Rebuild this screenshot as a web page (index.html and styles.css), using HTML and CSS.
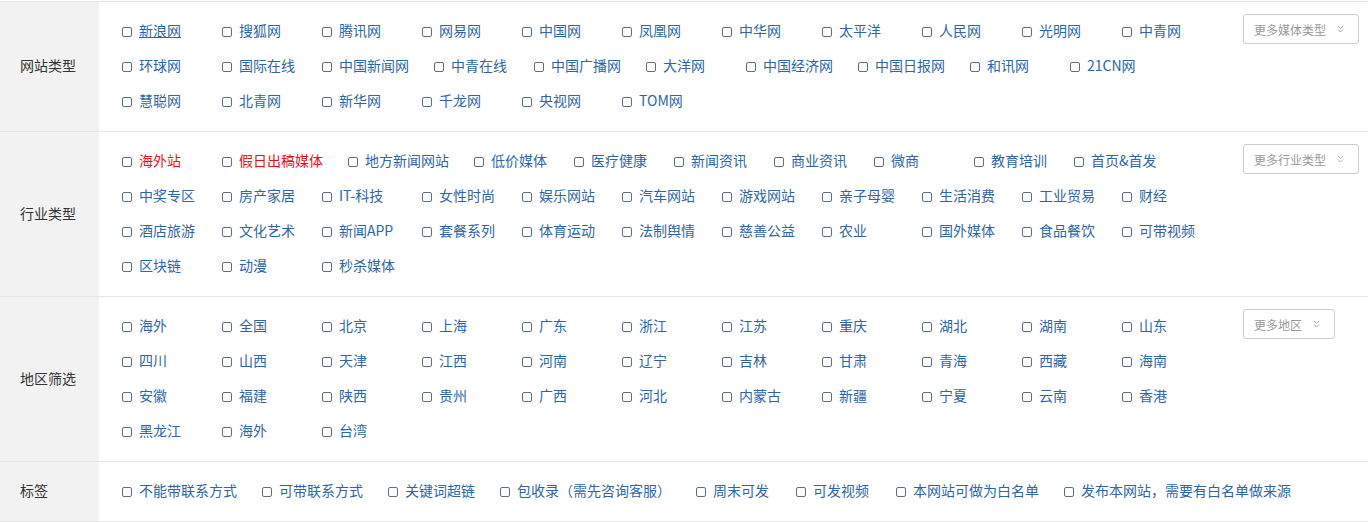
FILE: index.html
```html
<!DOCTYPE html>
<html lang="zh-CN">
<head>
    <meta charset="utf-8">
    <title>媒体筛选</title>
    <link rel="stylesheet" href="styles.css">
</head>
<body>
    <div class="filter">
        <!-- 网站类型 -->
        <div class="filter-row">
            <div class="filter-label">网站类型</div>
            <div class="filter-body">
                <div class="option-list">
                    <label class="option is-hover"><input type="checkbox" class="box"><span class="name">新浪网</span></label>
                    <label class="option"><input type="checkbox" class="box"><span class="name">搜狐网</span></label>
                    <label class="option"><input type="checkbox" class="box"><span class="name">腾讯网</span></label>
                    <label class="option"><input type="checkbox" class="box"><span class="name">网易网</span></label>
                    <label class="option"><input type="checkbox" class="box"><span class="name">中国网</span></label>
                    <label class="option"><input type="checkbox" class="box"><span class="name">凤凰网</span></label>
                    <label class="option"><input type="checkbox" class="box"><span class="name">中华网</span></label>
                    <label class="option"><input type="checkbox" class="box"><span class="name">太平洋</span></label>
                    <label class="option"><input type="checkbox" class="box"><span class="name">人民网</span></label>
                    <label class="option"><input type="checkbox" class="box"><span class="name">光明网</span></label>
                    <label class="option"><input type="checkbox" class="box"><span class="name">中青网</span></label>
                    <label class="option"><input type="checkbox" class="box"><span class="name">环球网</span></label>
                    <label class="option"><input type="checkbox" class="box"><span class="name">国际在线</span></label>
                    <label class="option"><input type="checkbox" class="box"><span class="name">中国新闻网</span></label>
                    <label class="option"><input type="checkbox" class="box"><span class="name">中青在线</span></label>
                    <label class="option"><input type="checkbox" class="box"><span class="name">中国广播网</span></label>
                    <label class="option"><input type="checkbox" class="box"><span class="name">大洋网</span></label>
                    <label class="option"><input type="checkbox" class="box"><span class="name">中国经济网</span></label>
                    <label class="option"><input type="checkbox" class="box"><span class="name">中国日报网</span></label>
                    <label class="option"><input type="checkbox" class="box"><span class="name">和讯网</span></label>
                    <label class="option"><input type="checkbox" class="box"><span class="name">21CN网</span></label>
                    <label class="option"><input type="checkbox" class="box"><span class="name">慧聪网</span></label>
                    <label class="option"><input type="checkbox" class="box"><span class="name">北青网</span></label>
                    <label class="option"><input type="checkbox" class="box"><span class="name">新华网</span></label>
                    <label class="option"><input type="checkbox" class="box"><span class="name">千龙网</span></label>
                    <label class="option"><input type="checkbox" class="box"><span class="name">央视网</span></label>
                    <label class="option"><input type="checkbox" class="box"><span class="name">TOM网</span></label>
                </div>
                <div class="filter-more">
                    <button class="more-btn">更多媒体类型<svg width="7" height="8" viewBox="0 0 7 8"><path d="M1 1l2.5 2.5L6 1M1 4.5l2.5 2.5L6 4.5"/></svg></button>
                </div>
            </div>
        </div>

        <!-- 行业类型 -->
        <div class="filter-row">
            <div class="filter-label">行业类型</div>
            <div class="filter-body">
                <div class="option-list">
                    <label class="option is-hot"><input type="checkbox" class="box"><span class="name">海外站</span></label>
                    <label class="option is-hot"><input type="checkbox" class="box"><span class="name">假日出稿媒体</span></label>
                    <label class="option"><input type="checkbox" class="box"><span class="name">地方新闻网站</span></label>
                    <label class="option"><input type="checkbox" class="box"><span class="name">低价媒体</span></label>
                    <label class="option"><input type="checkbox" class="box"><span class="name">医疗健康</span></label>
                    <label class="option"><input type="checkbox" class="box"><span class="name">新闻资讯</span></label>
                    <label class="option"><input type="checkbox" class="box"><span class="name">商业资讯</span></label>
                    <label class="option"><input type="checkbox" class="box"><span class="name">微商</span></label>
                    <label class="option"><input type="checkbox" class="box"><span class="name">教育培训</span></label>
                    <label class="option"><input type="checkbox" class="box"><span class="name">首页&amp;首发</span></label>
                    <label class="option"><input type="checkbox" class="box"><span class="name">中奖专区</span></label>
                    <label class="option"><input type="checkbox" class="box"><span class="name">房产家居</span></label>
                    <label class="option"><input type="checkbox" class="box"><span class="name">IT-科技</span></label>
                    <label class="option"><input type="checkbox" class="box"><span class="name">女性时尚</span></label>
                    <label class="option"><input type="checkbox" class="box"><span class="name">娱乐网站</span></label>
                    <label class="option"><input type="checkbox" class="box"><span class="name">汽车网站</span></label>
                    <label class="option"><input type="checkbox" class="box"><span class="name">游戏网站</span></label>
                    <label class="option"><input type="checkbox" class="box"><span class="name">亲子母婴</span></label>
                    <label class="option"><input type="checkbox" class="box"><span class="name">生活消费</span></label>
                    <label class="option"><input type="checkbox" class="box"><span class="name">工业贸易</span></label>
                    <label class="option"><input type="checkbox" class="box"><span class="name">财经</span></label>
                    <label class="option"><input type="checkbox" class="box"><span class="name">酒店旅游</span></label>
                    <label class="option"><input type="checkbox" class="box"><span class="name">文化艺术</span></label>
                    <label class="option"><input type="checkbox" class="box"><span class="name">新闻APP</span></label>
                    <label class="option"><input type="checkbox" class="box"><span class="name">套餐系列</span></label>
                    <label class="option"><input type="checkbox" class="box"><span class="name">体育运动</span></label>
                    <label class="option"><input type="checkbox" class="box"><span class="name">法制舆情</span></label>
                    <label class="option"><input type="checkbox" class="box"><span class="name">慈善公益</span></label>
                    <label class="option"><input type="checkbox" class="box"><span class="name">农业</span></label>
                    <label class="option"><input type="checkbox" class="box"><span class="name">国外媒体</span></label>
                    <label class="option"><input type="checkbox" class="box"><span class="name">食品餐饮</span></label>
                    <label class="option"><input type="checkbox" class="box"><span class="name">可带视频</span></label>
                    <label class="option"><input type="checkbox" class="box"><span class="name">区块链</span></label>
                    <label class="option"><input type="checkbox" class="box"><span class="name">动漫</span></label>
                    <label class="option"><input type="checkbox" class="box"><span class="name">秒杀媒体</span></label>
                </div>
                <div class="filter-more">
                    <button class="more-btn">更多行业类型<svg width="7" height="8" viewBox="0 0 7 8"><path d="M1 1l2.5 2.5L6 1M1 4.5l2.5 2.5L6 4.5"/></svg></button>
                </div>
            </div>
        </div>

        <!-- 地区筛选 -->
        <div class="filter-row">
            <div class="filter-label">地区筛选</div>
            <div class="filter-body">
                <div class="option-list">
                    <label class="option"><input type="checkbox" class="box"><span class="name">海外</span></label>
                    <label class="option"><input type="checkbox" class="box"><span class="name">全国</span></label>
                    <label class="option"><input type="checkbox" class="box"><span class="name">北京</span></label>
                    <label class="option"><input type="checkbox" class="box"><span class="name">上海</span></label>
                    <label class="option"><input type="checkbox" class="box"><span class="name">广东</span></label>
                    <label class="option"><input type="checkbox" class="box"><span class="name">浙江</span></label>
                    <label class="option"><input type="checkbox" class="box"><span class="name">江苏</span></label>
                    <label class="option"><input type="checkbox" class="box"><span class="name">重庆</span></label>
                    <label class="option"><input type="checkbox" class="box"><span class="name">湖北</span></label>
                    <label class="option"><input type="checkbox" class="box"><span class="name">湖南</span></label>
                    <label class="option"><input type="checkbox" class="box"><span class="name">山东</span></label>
                    <label class="option"><input type="checkbox" class="box"><span class="name">四川</span></label>
                    <label class="option"><input type="checkbox" class="box"><span class="name">山西</span></label>
                    <label class="option"><input type="checkbox" class="box"><span class="name">天津</span></label>
                    <label class="option"><input type="checkbox" class="box"><span class="name">江西</span></label>
                    <label class="option"><input type="checkbox" class="box"><span class="name">河南</span></label>
                    <label class="option"><input type="checkbox" class="box"><span class="name">辽宁</span></label>
                    <label class="option"><input type="checkbox" class="box"><span class="name">吉林</span></label>
                    <label class="option"><input type="checkbox" class="box"><span class="name">甘肃</span></label>
                    <label class="option"><input type="checkbox" class="box"><span class="name">青海</span></label>
                    <label class="option"><input type="checkbox" class="box"><span class="name">西藏</span></label>
                    <label class="option"><input type="checkbox" class="box"><span class="name">海南</span></label>
                    <label class="option"><input type="checkbox" class="box"><span class="name">安徽</span></label>
                    <label class="option"><input type="checkbox" class="box"><span class="name">福建</span></label>
                    <label class="option"><input type="checkbox" class="box"><span class="name">陕西</span></label>
                    <label class="option"><input type="checkbox" class="box"><span class="name">贵州</span></label>
                    <label class="option"><input type="checkbox" class="box"><span class="name">广西</span></label>
                    <label class="option"><input type="checkbox" class="box"><span class="name">河北</span></label>
                    <label class="option"><input type="checkbox" class="box"><span class="name">内蒙古</span></label>
                    <label class="option"><input type="checkbox" class="box"><span class="name">新疆</span></label>
                    <label class="option"><input type="checkbox" class="box"><span class="name">宁夏</span></label>
                    <label class="option"><input type="checkbox" class="box"><span class="name">云南</span></label>
                    <label class="option"><input type="checkbox" class="box"><span class="name">香港</span></label>
                    <label class="option"><input type="checkbox" class="box"><span class="name">黑龙江</span></label>
                    <label class="option"><input type="checkbox" class="box"><span class="name">海外</span></label>
                    <label class="option"><input type="checkbox" class="box"><span class="name">台湾</span></label>
                </div>
                <div class="filter-more">
                    <button class="more-btn">更多地区<svg width="7" height="8" viewBox="0 0 7 8"><path d="M1 1l2.5 2.5L6 1M1 4.5l2.5 2.5L6 4.5"/></svg></button>
                </div>
            </div>
        </div>

        <!-- 标签 -->
        <div class="filter-row">
            <div class="filter-label">标签</div>
            <div class="filter-body">
                <div class="option-list">
                    <label class="option"><input type="checkbox" class="box"><span class="name">不能带联系方式</span></label>
                    <label class="option"><input type="checkbox" class="box"><span class="name">可带联系方式</span></label>
                    <label class="option"><input type="checkbox" class="box"><span class="name">关键词超链</span></label>
                    <label class="option"><input type="checkbox" class="box"><span class="name">包收录（需先咨询客服）</span></label>
                    <label class="option"><input type="checkbox" class="box"><span class="name">周末可发</span></label>
                    <label class="option"><input type="checkbox" class="box"><span class="name">可发视频</span></label>
                    <label class="option"><input type="checkbox" class="box"><span class="name">本网站可做为白名单</span></label>
                    <label class="option"><input type="checkbox" class="box"><span class="name">发布本网站，需要有白名单做来源</span></label>
                </div>
            </div>
        </div>
    </div>
</body>
</html>
```

FILE: styles.css
```css
body {
    margin: 0;
    padding: 0;
    font-family: "Noto Sans CJK SC", "Liberation Sans", sans-serif;
    font-size: 14px;
    background-color: #fff;
}

.filter {
    margin-top: 1px;
    border-top: 1px solid #e6e6e6;
}

.filter-row {
    display: flex;
    border-bottom: 1px solid #e6e6e6;
}

.filter-label {
    width: 99px;
    flex-shrink: 0;
    padding: 0 0 3px 20px;
    box-sizing: border-box;
    display: flex;
    align-items: center;
    background-color: #f2f2f2;
    color: #333;
}

.filter-body {
    flex: 1;
    display: flex;
    align-items: flex-start;
    padding: 12px 0 12px 22px;
}

.option-list {
    flex: 1;
    display: flex;
    flex-wrap: wrap;
}

.option {
    display: inline-flex;
    align-items: center;
    height: 35px;
    min-width: 76px;
    margin-right: 24px;
    color: #2e66a3;
    white-space: nowrap;
    cursor: pointer;
}

.name {
    margin-bottom: 4px;
}

.box {
    -webkit-appearance: none;
    appearance: none;
    width: 10px;
    height: 10px;
    margin: 0 7px 0 1px;
    border: 1px solid #5d6e82;
    border-radius: 2px;
    background: #fff;
    box-sizing: border-box;
}

.option.is-hover .name {
    text-decoration: underline;
}

.option.is-hot {
    color: #e8101a;
}

.filter-more {
    width: 125px;
    flex-shrink: 0;
}

.more-btn {
    display: inline-flex;
    align-items: center;
    gap: 11px;
    height: 30px;
    padding: 0 14px 0 10px;
    border: 1px solid #cccccc;
    border-radius: 3px;
    background-color: #fff;
    color: #999;
    font-family: inherit;
    font-size: 12px;
    cursor: pointer;
}

.more-btn span,
.more-btn svg {
    flex-shrink: 0;
}

.more-btn svg {
    fill: none;
    stroke: #aaa;
    stroke-width: 1;
}
```
